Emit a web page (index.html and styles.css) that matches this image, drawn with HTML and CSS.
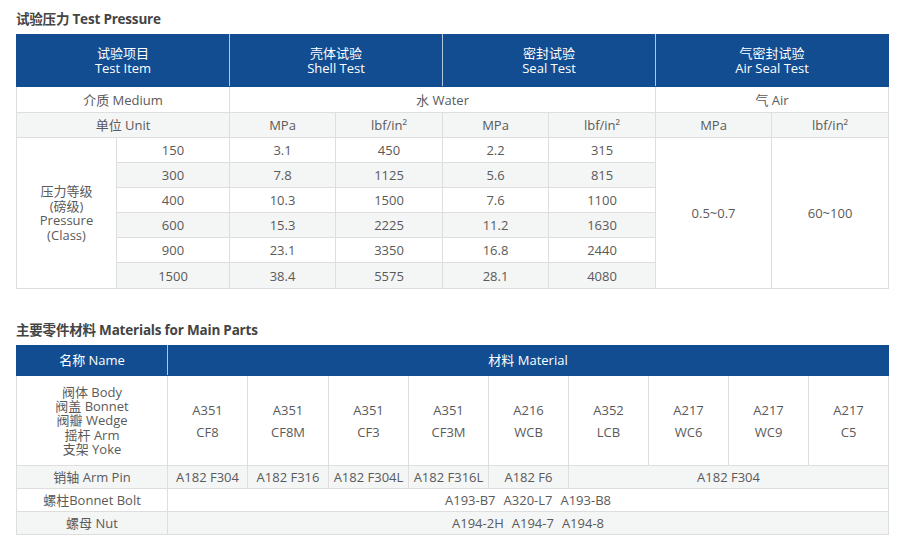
FILE: index.html
```html
<!DOCTYPE html>
<html lang="zh-CN">
<head>
<meta charset="utf-8">
<title>Test Pressure</title>
<link rel="stylesheet" href="styles.css">
</head>
<body>
<div class="page">
  <h2 class="title first">试验压力 Test Pressure</h2>
  <table class="tbl t1">
    <colgroup>
      <col style="width:100px"><col style="width:113px"><col style="width:106px"><col style="width:107px"><col style="width:106px"><col style="width:107px"><col style="width:116px"><col style="width:117px">
    </colgroup>
    <tr class="head h52">
      <th colspan="2">试验项目<br>Test Item</th>
      <th colspan="2">壳体试验<br>Shell Test</th>
      <th colspan="2">密封试验<br>Seal Test</th>
      <th colspan="2">气密封试验<br>Air Seal Test</th>
    </tr>
    <tr class="r26">
      <td colspan="2">介质 Medium</td>
      <td colspan="4">水 Water</td>
      <td colspan="2">气 Air</td>
    </tr>
    <tr class="r25 gray">
      <td colspan="2">单位 Unit</td>
      <td>MPa</td><td>lbf/in²</td><td>MPa</td><td>lbf/in²</td><td>MPa</td><td>lbf/in²</td>
    </tr>
    <tr class="r25">
      <td rowspan="6" class="white lbl">压力等级<br>(磅级)<br>Pressure<br>(Class)</td>
      <td>150</td><td>3.1</td><td>450</td><td>2.2</td><td>315</td>
      <td rowspan="6" class="white">0.5~0.7</td>
      <td rowspan="6" class="white">60~100</td>
    </tr>
    <tr class="r25 gray"><td>300</td><td>7.8</td><td>1125</td><td>5.6</td><td>815</td></tr>
    <tr class="r25"><td>400</td><td>10.3</td><td>1500</td><td>7.6</td><td>1100</td></tr>
    <tr class="r25 gray"><td>600</td><td>15.3</td><td>2225</td><td>11.2</td><td>1630</td></tr>
    <tr class="r25"><td>900</td><td>23.1</td><td>3350</td><td>16.8</td><td>2440</td></tr>
    <tr class="r26 gray"><td>1500</td><td>38.4</td><td>5575</td><td>28.1</td><td>4080</td></tr>
  </table>

  <h2 class="title second">主要零件材料 Materials for Main Parts</h2>
  <table class="tbl t2">
    <colgroup>
      <col style="width:151px"><col style="width:80px"><col style="width:81px"><col style="width:80px"><col style="width:80px"><col style="width:80px"><col style="width:80px"><col style="width:80px"><col style="width:80px"><col style="width:80px">
    </colgroup>
    <tr class="head h30">
      <th>名称 Name</th>
      <th colspan="9">材料 Material</th>
    </tr>
    <tr class="h90">
      <td class="names">阀体 Body<br>阀盖 Bonnet<br>阀瓣 Wedge<br>摇杆 Arm<br>支架 Yoke</td>
      <td class="mat">A351<br>CF8</td>
      <td class="mat">A351<br>CF8M</td>
      <td class="mat">A351<br>CF3</td>
      <td class="mat">A351<br>CF3M</td>
      <td class="mat">A216<br>WCB</td>
      <td class="mat">A352<br>LCB</td>
      <td class="mat">A217<br>WC6</td>
      <td class="mat">A217<br>WC9</td>
      <td class="mat">A217<br>C5</td>
    </tr>
    <tr class="r23 gray">
      <td>销轴 Arm Pin</td>
      <td>A182 F304</td><td>A182 F316</td><td>A182 F304L</td><td>A182 F316L</td><td>A182 F6</td>
      <td colspan="4">A182 F304</td>
    </tr>
    <tr class="r23">
      <td>螺柱Bonnet Bolt</td>
      <td colspan="9">A193-B7<span class="sp"></span>A320-L7<span class="sp"></span>A193-B8</td>
    </tr>
    <tr class="r23 gray">
      <td>螺母 Nut</td>
      <td colspan="9">A194-2H<span class="sp"></span>A194-7<span class="sp"></span>A194-8</td>
    </tr>
  </table>
</div>
</body>
</html>
```

FILE: styles.css
```css
html, body {
  margin: 0;
  padding: 0;
  background: #ffffff;
}

.page {
  padding: 0 12px 0 16px;
  font-family: "Open Sans", "Noto Sans CJK SC", sans-serif;
  color: #5a5a5a;
  font-size: 13px;
}

.title {
  margin: 0;
  font-size: 13.5px;
  font-weight: 700;
  color: #444444;
  line-height: 30px;
  letter-spacing: -0.2px;
}

.title.first {
  padding-top: 4px;
}

.title.second {
  padding-top: 26px;
}

.tbl {
  width: 872px;
  table-layout: fixed;
  border-collapse: collapse;
}

.tbl td,
.tbl th {
  border: 1px solid #dedede;
  text-align: center;
  vertical-align: middle;
  padding: 0;
  font-weight: 400;
  line-height: 14px;
  white-space: nowrap;
}

.tbl .head th {
  background: #124d91;
  color: #ffffff;
  border-top-color: #124d91;
  border-bottom-color: #124d91;
  border-left-color: #b4c6de;
  border-right-color: #b4c6de;
  line-height: 15px;
}

.tbl .head th:first-child {
  border-left-color: #124d91;
}

.tbl .head th:last-child {
  border-right-color: #124d91;
}

.h52 { height: 52px; }
.h30 { height: 30px; }
.h90 { height: 90px; }
.r26 { height: 26px; }
.r25 { height: 25px; }
.r23 { height: 23px; }

.tbl .gray td {
  background: #f4f5f5;
}

.tbl .gray td.white,
.tbl td.white {
  background: #ffffff;
}

.tbl td.lbl {
  line-height: 14.5px;
}

.tbl td.names {
  line-height: 14.3px;
}

.tbl td.mat {
  line-height: 22px;
}

.sp {
  display: inline-block;
  width: 8px;
}
```
